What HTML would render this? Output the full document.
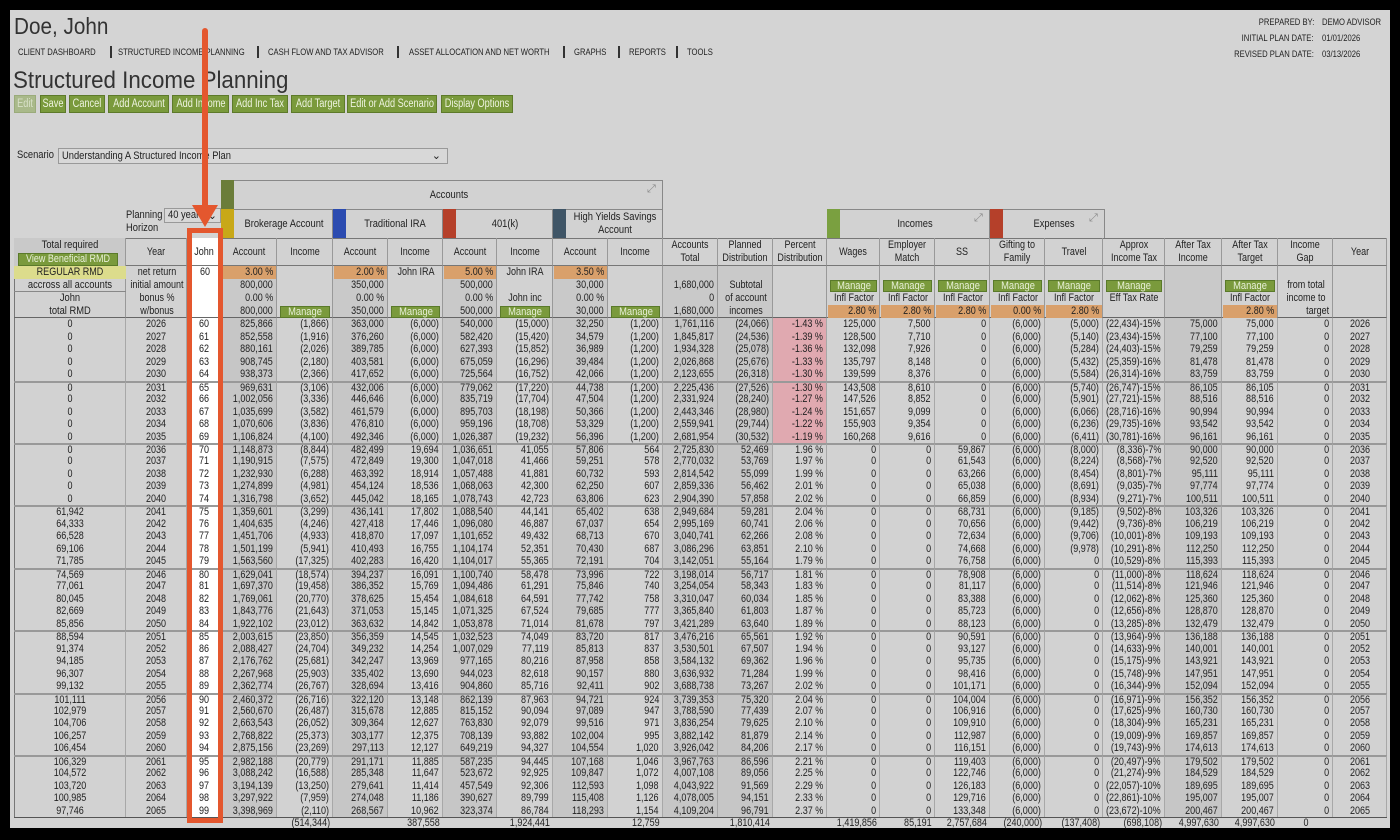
<!DOCTYPE html>
<html><head><meta charset="utf-8">
<style>
*{box-sizing:border-box;margin:0;padding:0}
body{width:1400px;height:840px;background:#000;position:relative;overflow:hidden;font-family:"Liberation Sans",sans-serif;color:#222}
#pg{position:absolute;left:10px;top:10px;width:1380px;height:818px;background:#d4d4d4}
.a{position:absolute;white-space:nowrap}
.c{position:absolute;font-size:11px;line-height:12px;white-space:nowrap}
.t{position:absolute;white-space:nowrap;display:block}
.mg{position:absolute;background:#7a9a3c;color:#e8f0d8;border:1px solid #5a7a2a;font-size:11px;line-height:11px;white-space:nowrap}
</style></head><body>
<div id="pg"></div>
<script>
const pg=document.getElementById('pg');
function el(h){pg.insertAdjacentHTML('beforeend',h)}
// text lines positioned inside a positioned container
function T(lines,al,k,lh,h){
 if(!Array.isArray(lines))lines=[lines];k=k||.82;al=al||'center';
 const top0=(h-lines.length*lh)/2;let o='';
 lines.forEach((t,i)=>{const y=top0+i*lh;let pos;
  if(al=='center')pos=`left:50%;transform:translateX(-50%) scaleX(${k})`;
  else if(al=='right')pos=`right:3px;transform-origin:right center;transform:scaleX(${k})`;
  else pos=`left:3px;transform-origin:left center;transform:scaleX(${k})`;
  o+=`<span class="t" style="top:${y}px;line-height:${lh}px;${pos}">${t}</span>`;});
 return o;}
function A(x,y,w,h,style,txt){el(`<div class="a" style="left:${x-10}px;top:${y-10}px;width:${w}px;height:${h}px;${style}">${txt||''}</div>`)}
A(11,12,200,28,'font-size:23px;color:#333',T('Doe, John','left',.9,28,28));
const navs=[[18,'CLIENT DASHBOARD'],[118,'STRUCTURED INCOME PLANNING'],[268,'CASH FLOW AND TAX ADVISOR'],[409,'ASSET ALLOCATION AND NET WORTH'],[574,'GRAPHS'],[629,'REPORTS'],[687,'TOOLS']];
navs.forEach(n=>A(n[0]-3,46,200,12,'font-size:9px;color:#222',T(n[1],'left',.85,12,12)));
[110,257,397,563,618,676].forEach(x=>A(x,46,2,12,'background:#333'));
function R(y,l,v){A(1180,y,137,12,'font-size:9px',T(l,'right',.85,12,12));A(1319,y,80,12,'font-size:9px',T(v,'left',.85,12,12))}
R(16,'PREPARED BY:','DEMO ADVISOR');R(32,'INITIAL PLAN DATE:','01/01/2026');R(48,'REVISED PLAN DATE:','03/13/2026');
A(10,66,400,30,'font-size:24px;color:#333',T('Structured Income Planning','left',.93,30,30));
const bts=[[14,36,'Edit',1],[40,66,'Save'],[69,105,'Cancel'],[108,169,'Add Account'],[172,229,'Add Income'],[232,288,'Add Inc Tax'],[291,345,'Add Target'],[347,437,'Edit or Add Scenario'],[441,513,'Display Options']];
bts.forEach(b=>A(b[0],95,b[1]-b[0],18,`background:${b[3]?'#a9b98a':'#7a9a3c'};border:1px solid ${b[3]?'#9aab7a':'#5d7a2a'};color:${b[3]?'#d8e0c8':'#eef3e0'};font-size:11.5px`,T(b[2],'center',.8,16,16)));
A(14,148,50,14,'font-size:11px',T('Scenario','left',.85,14,14));
A(58,148,390,16,'border:1px solid #999;background:#d8d8d8;font-size:11px',T('Understanding A Structured Income Plan','left',.85,14,14)+'<span style="position:absolute;right:6px;top:0">&#8964;</span>');
A(123,208,45,28,'font-size:11px',T(['Planning','Horizon'],'left',.85,13,28));
A(164,208,57,15,'border:1px solid #999;background:#d8d8d8;font-size:11px;overflow:hidden',T('40 years','left',.85,13,13)+'<span style="position:absolute;right:3px">&#8964;</span>');
function box(x1,x2,y1,y2,bar,txt,icon){A(x1,y1,x2-x1,y2-y1,'border:1px solid #888;background:#d2d2d2');A(x1,y1,13,y2-y1,'background:'+bar);A(x1+13,y1,x2-x1-13,y2-y1,'font-size:11px',T(txt,'center',.85,13,y2-y1));if(icon)A(x2-16,y1+3,12,12,'font-size:11px;color:#888','&#10530;');}
box(221,663,180,210,'#6b7d3a','Accounts',1);
box(221,333,209,239,'#c8a818','Brokerage Account');
box(333,443,209,239,'#2b4bb0','Traditional IRA');
box(443,553,209,239,'#b5402a','401(k)');
A(553,209,110,30,'border:1px solid #888;background:#d2d2d2');A(553,209,13,30,'background:#3f5566');A(566,209,97,30,'font-size:11px',T(['High Yields Savings','Account'],'center',.85,13,30));
box(827,990,209,239,'#7aa040','Incomes',1);
box(990,1105,209,239,'#b5402a','Expenses',1);

const X=[14,126,187,222,277,333,388,443,497,553,608,663,718,773,827,880,935,990,1045,1103,1165,1222,1278,1333,1387];
const acctCols=[3,5,7,9,11,12,20];
const hd=['','Year','John','Account','Income','Account','Income','Account','Income','Account','Income','Accounts|Total','Planned|Distribution','Percent|Distribution','Wages','Employer|Match','SS','Gifting to|Family','Travel','Approx|Income Tax','After Tax|Income','After Tax|Target','Income|Gap','Year'];
A(14,238,1373,580,'border:1px solid #777;background:#d2d2d2');
for(let i=0;i<24;i++){
 A(X[i],238,X[i+1]-X[i],28,'border-right:1px solid #999;border-bottom:1px solid #777;font-size:11px'+(i==2?';background:#fff':''),T(hd[i].split('|'),'center',.82,13,28));
 A(X[i],266,X[i+1]-X[i],52,'border-right:1px solid #999;border-bottom:1px solid #666;'+(acctCols.includes(i)?'background:#c9c9c9':'')+(i==2?';background:#fff':''));
}
A(14,238,112,28,'background:#c9c9c9;border-right:1px solid #999;font-size:11px',T('Total required','center',.85,14,14));
el(`<div class="mg" style="left:8px;top:243px;width:100px;height:13px">${T('View Beneficial RMD','center',.82,11,11)}</div>`);
A(14,266,112,13,'background:#dcdc8c;font-size:11px',T('REGULAR RMD','center',.82,13,13));
A(14,279,112,13,'font-size:11px;border-bottom:1px solid #888',T('accross all accounts','center',.85,13,13));
A(14,292,112,13,'font-size:11px',T('John','center',.85,13,13));
A(14,305,112,13,'font-size:11px',T('total RMD','center',.85,13,13));
function P(ci,r,txt,cls,align){const x=X[ci],w=X[ci+1]-X[ci];A(x+1,266+r*13,w-2,13,`font-size:11px;${cls||''}`,T(txt,align||'right',.82,13,13))}
function M(ci,r){const x=X[ci],w=X[ci+1]-X[ci];el(`<div class="mg" style="left:${x-10+3}px;top:${266+r*13-10+1}px;width:${w-6}px;height:12px">${T('Manage','center',.85,10,10)}</div>`)}
['net return','initial amount','bonus %','w/bonus'].forEach((t,r)=>P(1,r,t,'','center'));
P(2,0,'60','','center');
[[3,'3.00 %','800,000','800,000'],[5,'2.00 %','350,000','350,000'],[7,'5.00 %','500,000','500,000'],[9,'3.50 %','30,000','30,000']].forEach(a=>{P(a[0],0,a[1],'background:#d9a06b');P(a[0],1,a[2]);P(a[0],2,'0.00 %');P(a[0],3,a[3]);M(a[0]+1,3)});
P(6,0,'John IRA','','center');P(8,0,'John IRA','','center');P(8,2,'John inc','','center');
P(11,1,'1,680,000');P(11,2,'0');P(11,3,'1,680,000');
P(12,1,'Subtotal','','center');P(12,2,'of account','','center');P(12,3,'incomes','','center');
[14,15,16,17,18,21].forEach(c=>{M(c,1);P(c,2,'Infl Factor','','center');P(c,3,c==17?'0.00 %':'2.80 %','background:#d9a06b')});
M(19,1);P(19,2,'Eff Tax Rate','','center');
P(22,1,'from total','','center');P(22,2,'income to','','center');P(22,3,'target','','right');

const D=`0|60|825,866|(1,866)|363,000|(6,000)|540,000|(15,000)|32,250|(1,200)|1,761,116|(24,066)|-1.43|125,000|7,500|0|(6,000)|(5,000)|(22,434)-15%|75,000
0|61|852,558|(1,916)|376,260|(6,000)|582,420|(15,420)|34,579|(1,200)|1,845,817|(24,536)|-1.39|128,500|7,710|0|(6,000)|(5,140)|(23,434)-15%|77,100
0|62|880,161|(2,026)|389,785|(6,000)|627,393|(15,852)|36,989|(1,200)|1,934,328|(25,078)|-1.36|132,098|7,926|0|(6,000)|(5,284)|(24,403)-15%|79,259
0|63|908,745|(2,180)|403,581|(6,000)|675,059|(16,296)|39,484|(1,200)|2,026,868|(25,676)|-1.33|135,797|8,148|0|(6,000)|(5,432)|(25,359)-16%|81,478
0|64|938,373|(2,366)|417,652|(6,000)|725,564|(16,752)|42,066|(1,200)|2,123,655|(26,318)|-1.30|139,599|8,376|0|(6,000)|(5,584)|(26,314)-16%|83,759
0|65|969,631|(3,106)|432,006|(6,000)|779,062|(17,220)|44,738|(1,200)|2,225,436|(27,526)|-1.30|143,508|8,610|0|(6,000)|(5,740)|(26,747)-15%|86,105
0|66|1,002,056|(3,336)|446,646|(6,000)|835,719|(17,704)|47,504|(1,200)|2,331,924|(28,240)|-1.27|147,526|8,852|0|(6,000)|(5,901)|(27,721)-15%|88,516
0|67|1,035,699|(3,582)|461,579|(6,000)|895,703|(18,198)|50,366|(1,200)|2,443,346|(28,980)|-1.24|151,657|9,099|0|(6,000)|(6,066)|(28,716)-16%|90,994
0|68|1,070,606|(3,836)|476,810|(6,000)|959,196|(18,708)|53,329|(1,200)|2,559,941|(29,744)|-1.22|155,903|9,354|0|(6,000)|(6,236)|(29,735)-16%|93,542
0|69|1,106,824|(4,100)|492,346|(6,000)|1,026,387|(19,232)|56,396|(1,200)|2,681,954|(30,532)|-1.19|160,268|9,616|0|(6,000)|(6,411)|(30,781)-16%|96,161
0|70|1,148,873|(8,844)|482,499|19,694|1,036,651|41,055|57,806|564|2,725,830|52,469|1.96|0|0|59,867|(6,000)|(8,000)|(8,336)-7%|90,000
0|71|1,190,915|(7,575)|472,849|19,300|1,047,018|41,466|59,251|578|2,770,032|53,769|1.97|0|0|61,543|(6,000)|(8,224)|(8,568)-7%|92,520
0|72|1,232,930|(6,288)|463,392|18,914|1,057,488|41,881|60,732|593|2,814,542|55,099|1.99|0|0|63,266|(6,000)|(8,454)|(8,801)-7%|95,111
0|73|1,274,899|(4,981)|454,124|18,536|1,068,063|42,300|62,250|607|2,859,336|56,462|2.01|0|0|65,038|(6,000)|(8,691)|(9,035)-7%|97,774
0|74|1,316,798|(3,652)|445,042|18,165|1,078,743|42,723|63,806|623|2,904,390|57,858|2.02|0|0|66,859|(6,000)|(8,934)|(9,271)-7%|100,511
61,942|75|1,359,601|(3,299)|436,141|17,802|1,088,540|44,141|65,402|638|2,949,684|59,281|2.04|0|0|68,731|(6,000)|(9,185)|(9,502)-8%|103,326
64,333|76|1,404,635|(4,246)|427,418|17,446|1,096,080|46,887|67,037|654|2,995,169|60,741|2.06|0|0|70,656|(6,000)|(9,442)|(9,736)-8%|106,219
66,528|77|1,451,706|(4,933)|418,870|17,097|1,101,652|49,432|68,713|670|3,040,741|62,266|2.08|0|0|72,634|(6,000)|(9,706)|(10,001)-8%|109,193
69,106|78|1,501,199|(5,941)|410,493|16,755|1,104,174|52,351|70,430|687|3,086,296|63,851|2.10|0|0|74,668|(6,000)|(9,978)|(10,291)-8%|112,250
71,785|79|1,563,560|(17,325)|402,283|16,420|1,104,017|55,365|72,191|704|3,142,051|55,164|1.79|0|0|76,758|(6,000)|0|(10,529)-8%|115,393
74,569|80|1,629,041|(18,574)|394,237|16,091|1,100,740|58,478|73,996|722|3,198,014|56,717|1.81|0|0|78,908|(6,000)|0|(11,000)-8%|118,624
77,061|81|1,697,370|(19,458)|386,352|15,769|1,094,486|61,291|75,846|740|3,254,054|58,343|1.83|0|0|81,117|(6,000)|0|(11,514)-8%|121,946
80,045|82|1,769,061|(20,770)|378,625|15,454|1,084,618|64,591|77,742|758|3,310,047|60,034|1.85|0|0|83,388|(6,000)|0|(12,062)-8%|125,360
82,669|83|1,843,776|(21,643)|371,053|15,145|1,071,325|67,524|79,685|777|3,365,840|61,803|1.87|0|0|85,723|(6,000)|0|(12,656)-8%|128,870
85,856|84|1,922,102|(23,012)|363,632|14,842|1,053,878|71,014|81,678|797|3,421,289|63,640|1.89|0|0|88,123|(6,000)|0|(13,285)-8%|132,479
88,594|85|2,003,615|(23,850)|356,359|14,545|1,032,523|74,049|83,720|817|3,476,216|65,561|1.92|0|0|90,591|(6,000)|0|(13,964)-9%|136,188
91,374|86|2,088,427|(24,704)|349,232|14,254|1,007,029|77,119|85,813|837|3,530,501|67,507|1.94|0|0|93,127|(6,000)|0|(14,633)-9%|140,001
94,185|87|2,176,762|(25,681)|342,247|13,969|977,165|80,216|87,958|858|3,584,132|69,362|1.96|0|0|95,735|(6,000)|0|(15,175)-9%|143,921
96,307|88|2,267,968|(25,903)|335,402|13,690|944,023|82,618|90,157|880|3,636,932|71,284|1.99|0|0|98,416|(6,000)|0|(15,748)-9%|147,951
99,132|89|2,362,774|(26,767)|328,694|13,416|904,860|85,716|92,411|902|3,688,738|73,267|2.02|0|0|101,171|(6,000)|0|(16,344)-9%|152,094
101,111|90|2,460,372|(26,716)|322,120|13,148|862,139|87,963|94,721|924|3,739,353|75,320|2.04|0|0|104,004|(6,000)|0|(16,971)-9%|156,352
102,979|91|2,560,670|(26,487)|315,678|12,885|815,152|90,094|97,089|947|3,788,590|77,439|2.07|0|0|106,916|(6,000)|0|(17,625)-9%|160,730
104,706|92|2,663,543|(26,052)|309,364|12,627|763,830|92,079|99,516|971|3,836,254|79,625|2.10|0|0|109,910|(6,000)|0|(18,304)-9%|165,231
106,257|93|2,768,822|(25,373)|303,177|12,375|708,139|93,882|102,004|995|3,882,142|81,879|2.14|0|0|112,987|(6,000)|0|(19,009)-9%|169,857
106,454|94|2,875,156|(23,269)|297,113|12,127|649,219|94,327|104,554|1,020|3,926,042|84,206|2.17|0|0|116,151|(6,000)|0|(19,743)-9%|174,613
106,329|95|2,982,188|(20,779)|291,171|11,885|587,235|94,445|107,168|1,046|3,967,763|86,596|2.21|0|0|119,403|(6,000)|0|(20,497)-9%|179,502
104,572|96|3,088,242|(16,588)|285,348|11,647|523,672|92,925|109,847|1,072|4,007,108|89,056|2.25|0|0|122,746|(6,000)|0|(21,274)-9%|184,529
103,720|97|3,194,139|(13,250)|279,641|11,414|457,549|92,306|112,593|1,098|4,043,922|91,569|2.29|0|0|126,183|(6,000)|0|(22,057)-10%|189,695
100,985|98|3,297,922|(7,959)|274,048|11,186|390,627|89,799|115,408|1,126|4,078,005|94,151|2.33|0|0|129,716|(6,000)|0|(22,861)-10%|195,007
97,746|99|3,398,969|(2,110)|268,567|10,962|323,374|86,784|118,293|1,154|4,109,204|96,791|2.37|0|0|133,348|(6,000)|0|(23,672)-10%|200,467`.split('\n');
const RH=12.475;let h='';
D.forEach((line,r)=>{
 const f=line.split('|');const yr=2026+r;
 const v=[f[0],String(yr),f[1],f[2],f[3],f[4],f[5],f[6],f[7],f[8],f[9],f[10],f[11],f[12]+' %',f[13],f[14],f[15],f[16],f[17],f[18],f[19],f[19],'0',String(yr)];
 const y=Math.round((318+r*RH-10)*2)/2;
 const y2=Math.round((318+(r+1)*RH-10)*2)/2;
 const bt=(r%5==0&&r>0)?'border-top:2px solid #999;':'';
 for(let i=0;i<24;i++){
  let bg='';if(acctCols.includes(i))bg='background:#c6c6c6;';if(i==2)bg='background:#fff;';if(i==13&&r<10)bg='background:#e0a9b0;';
  const cen=(i==0||i==1||i==2||i==23);
  const al=cen?'center':(i==22?'right':'right');
  h+=`<div class="c" style="left:${X[i]-10}px;top:${y}px;width:${X[i+1]-X[i]}px;height:${y2-y}px;border-right:1px solid #a8a8a8;${bt}${bg}">${T(v[i],al,.82,12,y2-y-(bt?2:0))}</div>`;
 }
});
el(h);
A(14,817,1373,1,'background:#555');
const tot={4:'(514,344)',6:'387,558',8:'1,924,441',10:'12,759',12:'1,810,414',14:'1,419,856',15:'85,191',16:'2,757,684',17:'(240,000)',18:'(137,408)',19:'(698,108)',20:'4,997,630',21:'4,997,630',22:'0'};
for(const k in tot){const cen=k==22;A(X[k],817,X[+k+1]-X[k],12,'font-size:11px',T(tot[k],cen?'center':'right',.82,12,12))}
A(187,228,36,595,'border:5px solid #e4572e');
A(202,28,6,180,'background:#e4572e;border-radius:3px');
el(`<svg style="position:absolute;left:180px;top:190px" width="30" height="30"><polygon points="2,5 28,5 15,27" fill="#e4572e"/></svg>`);
</script>
</body></html>
